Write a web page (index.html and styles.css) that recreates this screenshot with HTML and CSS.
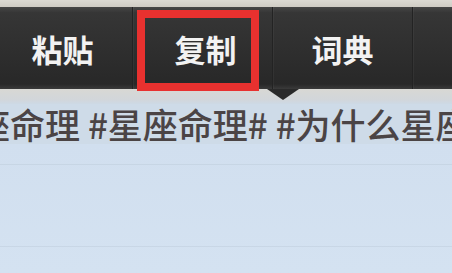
FILE: index.html
```html
<!DOCTYPE html>
<html lang="zh-CN">
<head>
<meta charset="utf-8">
<link rel="stylesheet" href="styles.css">
</head>
<body>
<div class="screen">
  <div class="top-strip"></div>
  <div class="menu">
    <div class="item">粘贴</div>
    <div class="item item-active">复制<span class="mark"></span></div>
    <div class="item">词典</div>
    <div class="item"></div>
    <span class="pointer"></span>
  </div>
  <div class="band"></div>
  <div class="text-row">座命理 #星座命理# #为什么星座命理#</div>
  <div class="rest">
    <div class="rule"></div>
    <div class="rule rule-2"></div>
  </div>
</div>
</body>
</html>
```
FILE: styles.css
```css
html, body {
  margin: 0;
  padding: 0;
}
body {
  width: 452px;
  height: 273px;
  overflow: hidden;
  background: #d3e1f0;
  font-family: "Noto Sans CJK SC", "Noto Sans", sans-serif;
}
.screen {
  width: 452px;
  height: 273px;
  overflow: hidden;
  display: flex;
  flex-direction: column;
}
.top-strip {
  height: 7px;
  flex: none;
  background: linear-gradient(#dcdad3, #cfccc4);
}
.menu {
  position: relative;
  height: 82px;
  flex: none;
  display: flex;
  margin-left: -7px;
  width: 600px;
  background: linear-gradient(#474747 0, #363636 7%, #2f2f2f 50%, #282828 94%, #3a3a3a 100%);
}
.item {
  position: relative;
  width: 140px;
  flex: none;
  display: flex;
  align-items: center;
  justify-content: center;
  color: #f2f2f2;
  font-size: 31px;
  font-weight: 700;
  border-right: 1px solid #232323;
  box-shadow: 1px 0 0 rgba(255,255,255,0.04);
  box-sizing: border-box;
}
.item-active {
  padding-left: 6px;
}
.mark {
  position: absolute;
  left: 4px;
  top: 3px;
  width: 122px;
  height: 81px;
  box-sizing: border-box;
  border: 8px solid #e8312f;
  filter: blur(0.6px);
}
.pointer {
  position: absolute;
  left: 274px;
  top: 82px;
  width: 0;
  height: 0;
  border-top: 11px solid #2a2a2a;
  border-left: 16px solid transparent;
  border-right: 16px solid transparent;
}
.band {
  height: 15px;
  flex: none;
  background: linear-gradient(#d8d8d4, #d2d6da 70%, #cdd9e5);
}
.text-row {
  height: 40px;
  flex: none;
  margin-left: -25px;
  width: 477px;
  overflow: hidden;
  white-space: nowrap;
  font-size: 35px;
  font-weight: 500;
  line-height: 40px;
  color: #4b4445;
  background: #cedbe8;
}
.rest {
  flex: 1;
  position: relative;
  background: linear-gradient(#d1dfef, #d4e2f1);
}
.rule {
  position: absolute;
  left: 0;
  right: 0;
  top: 20px;
  height: 1px;
  background: rgba(180, 195, 210, 0.35);
}
.rule-2 {
  top: 102px;
}
```
